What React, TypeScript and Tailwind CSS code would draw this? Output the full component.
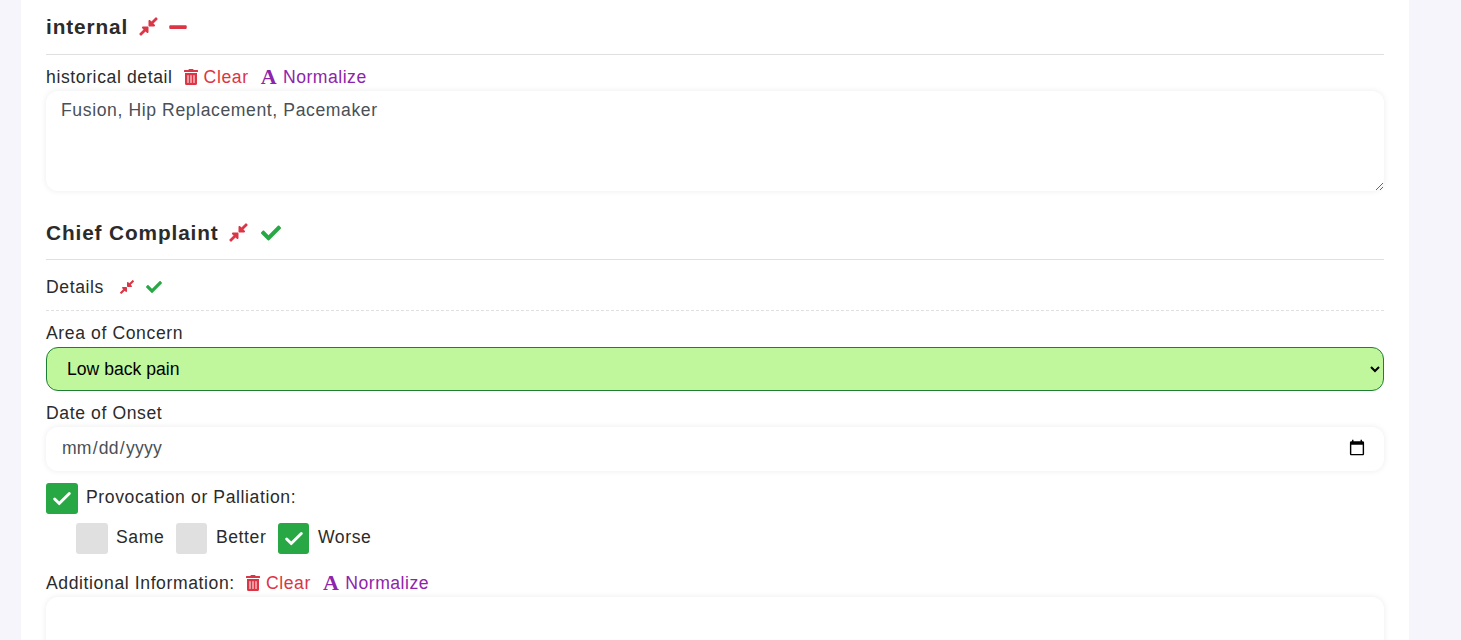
import React from "react";
import { FaCheck, FaCompressAlt, FaMinus, FaTrashAlt } from "react-icons/fa";
import { Check } from "lucide-react";

const font = { fontFamily: '"Liberation Sans", Arial, sans-serif' };

const Actions = () => (
  <>
    <span className="ml-[10px] inline-flex items-center gap-[5px] tracking-[0.6px] text-[#dc3545]">
      <FaTrashAlt className="text-[16px]" />
      Clear
    </span>
    <span className="ml-3 inline-flex items-center gap-[6px] tracking-[0.5px] text-[#8e24aa]">
      {/* the font icon is a serif capital */}
      <span aria-hidden className="text-[22px] leading-none font-bold" style={{ fontFamily: '"Liberation Serif", serif' }}>
        A
      </span>
      Normalize
    </span>
  </>
);

const Box = ({ checked }: { checked?: boolean }) => (
  <span
    className={`flex h-[31px] w-[31.5px] shrink-0 items-center justify-center rounded-[3px] text-white ${
      checked ? "bg-[#28a745]" : "bg-[#e0e0e0]"
    }`}
  >
    {checked && <Check size={22} strokeWidth={3.2} />}
  </span>
);

const Option = ({ label, checked }: { label: string; checked?: boolean }) => (
  <div className="flex items-center gap-[8.5px]">
    <Box checked={checked} />
    <span className="pb-[4px]">{label}</span>
  </div>
);

export default function App() {
  return (
    <div
      className="h-[640px] overflow-hidden bg-[#f5f5fb] pl-[21px] pr-[52px] text-[17.6px] leading-[22px] tracking-[0.6px] text-[#2b2b2b]"
      style={font}
    >
      <div className="h-full bg-white px-[25px]">
        {/* internal section */}
        <div className="flex h-[55px] items-center gap-[9.5px] border-b border-[#e0e0e0] pb-[1px]">
          <h2 className="text-[20.8px] font-bold tracking-[0.88px]">internal</h2>
          <FaCompressAlt className="text-[21px] text-[#dc3545]" />
          <FaMinus className="text-[20px] text-[#dc3545]" />
        </div>
        <div className="mt-[11px] flex h-[22px] items-center">
          historical detail
          <Actions />
        </div>
        <textarea
          className="mt-[3px] block h-[100px] w-full rounded-[12px] bg-white px-[15px] py-[8px] text-[#495057] shadow-[0_0_6px_rgba(0,0,0,0.08)] outline-none"
          defaultValue="Fusion, Hip Replacement, Pacemaker"
        />

        {/* chief complaint */}
        <div className="mt-[15px] flex h-[54px] items-center gap-[9.5px] border-b border-[#e0e0e0]">
          <h2 className="text-[20.8px] font-bold tracking-[0.88px]">Chief Complaint</h2>
          <FaCompressAlt className="text-[21px] text-[#dc3545]" />
          <FaCheck className="mt-[1px] ml-[2px] text-[20px] text-[#28a745]" />
        </div>
        <div className="flex h-[51px] items-center border-b border-dashed border-[#e0e0e0] pt-[3px]">
          Details
          <FaCompressAlt className="ml-[15px] text-[16px] text-[#dc3545]" />
          <FaCheck className="ml-[11px] text-[16px] text-[#28a745]" />
        </div>

        <div className="mt-[11px] h-[22px]">Area of Concern</div>
        <select className="mt-[3px] block h-[44px] w-full rounded-[12px] border border-[#1e7e34] bg-[#c1f79c] px-4 tracking-normal text-black outline-none">
          <option>Low back pain</option>
        </select>
        <div className="mt-[11px] h-[22px]">Date of Onset</div>
        <input
          type="date"
          className="mt-[3px] block h-[44px] w-full rounded-[12px] bg-white pr-4 pb-[2px] pl-[15px] tracking-[0.2px] text-[#495057] shadow-[0_0_6px_rgba(0,0,0,0.08)] outline-none"
        />

        <div className="mt-3 flex items-center gap-[8.5px]">
          <Box checked />
          <span className="pb-[4px]">Provocation or Palliation:</span>
        </div>
        <div className="mt-[9px] flex items-center gap-[11.5px] pl-[30px]">
          <Option label="Same" />
          <Option label="Better" />
          <Option label="Worse" checked />
        </div>

        <div className="mt-[18px] flex h-[22px] items-center">
          Additional Information:
          <Actions />
        </div>
        <textarea className="mt-[3px] block h-[100px] w-full rounded-[12px] bg-white shadow-[0_0_6px_rgba(0,0,0,0.08)] outline-none" />
      </div>
    </div>
  );
}
